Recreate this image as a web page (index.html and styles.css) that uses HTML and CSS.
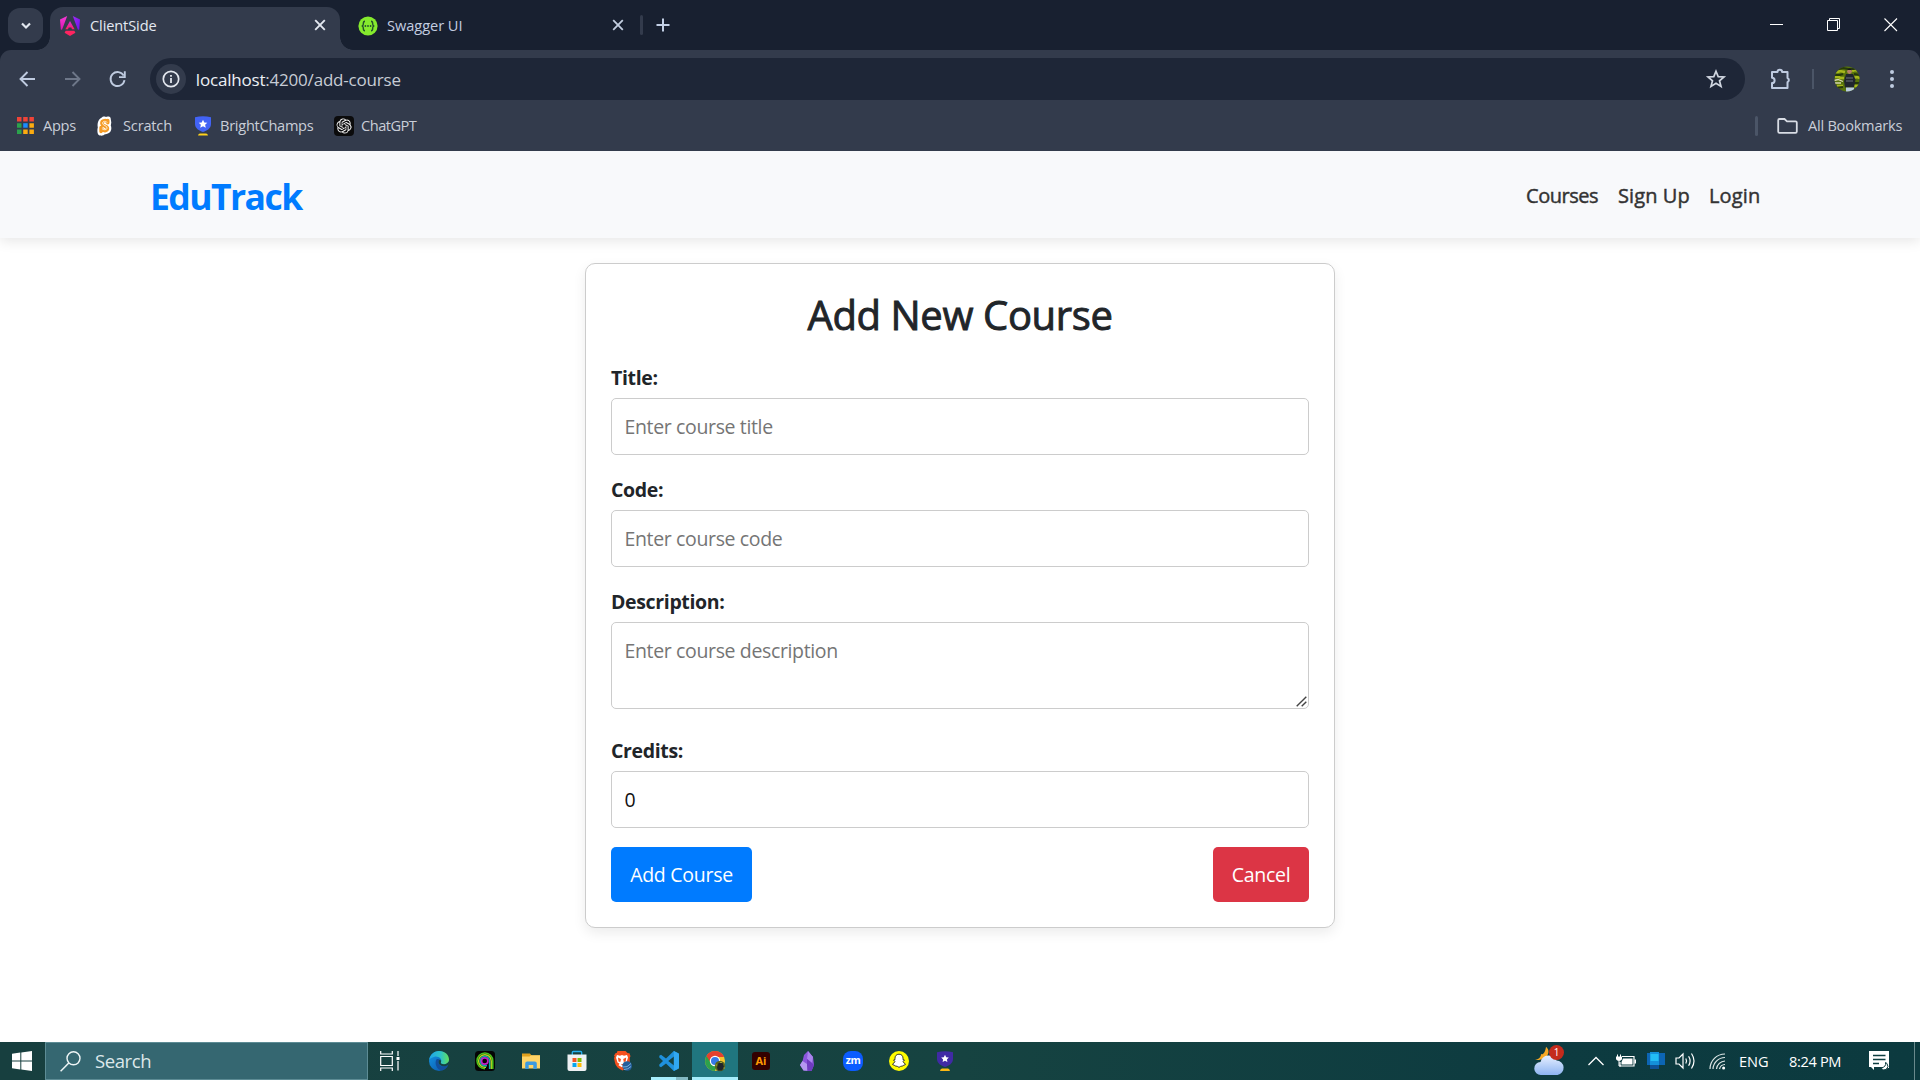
FILE: index.html
```html
<!DOCTYPE html>
<html lang="en">
<head>
<meta charset="utf-8">
<title>ClientSide</title>
<link rel="stylesheet" href="styles.css">
</head>
<body>
<div class="screen">

<header class="tabstrip">
  <div class="tab-search"><svg width="12" height="8" viewBox="0 0 12 8"><path d="M2 1.5 6 5.5 10 1.5" fill="none" stroke="#e3e8f0" stroke-width="2.2"/></svg></div>
  <div class="tab active">
    <svg class="favicon" width="20" height="20" viewBox="0 0 20 20">
      <defs>
        <linearGradient id="ngl" x1="0" y1="0" x2="0" y2="1"><stop offset="0" stop-color="#f83ad8"/><stop offset="1" stop-color="#d816b0"/></linearGradient>
        <linearGradient id="ngr" x1="0" y1="0" x2="1" y2="1"><stop offset="0" stop-color="#a12af5"/><stop offset="1" stop-color="#6a12ee"/></linearGradient>
        <linearGradient id="nga" x1="0" y1="0" x2="0" y2="1"><stop offset="0" stop-color="#d52ae0"/><stop offset="1" stop-color="#ff2060"/></linearGradient>
      </defs>
      <path d="M0 3.6 7.2 0 2 13.8.8 13.6Z" fill="url(#ngl)"/><path d="M12.8 0 20 3.6 19.2 13.6 18 13.8Z" fill="url(#ngr)"/>
      <path d="M10 5 14.6 13.3H12l-.7-1.7H8.7L8 13.3H5.4Z" fill="url(#nga)"/><path d="M5.6 14.8h8.800l1 2L10 20l-5.400-3.200Z" fill="#ff2460"/>
    </svg>
    <span class="tab-title">ClientSide</span>
    <svg class="close" width="12" height="12" viewBox="0 0 12 12"><path d="M1.2 1.2 10.8 10.8M10.8 1.2 1.2 10.8" stroke="#e3e8f0" stroke-width="1.9"/></svg>
  </div>
  <div class="tab">
    <svg class="favicon" width="20" height="20" viewBox="0 0 20 20">
      <circle cx="10" cy="10" r="9.6" fill="#85ea2d"/>
      <path d="M7 5.2C5 5.2 5.4 7 5.3 8.2 5.2 9.3 4.9 9.8 3.8 10c1.1.2 1.4.7 1.5 1.8.1 1.2-.3 3 1.7 3M13 5.2c2 0 1.6 1.8 1.7 3 .1 1.1.4 1.6 1.5 1.8-1.1.2-1.4.7-1.5 1.8-.1 1.2.3 3-1.7 3" fill="none" stroke="#23512c" stroke-width="1.4"/>
      <circle cx="7.4" cy="10" r=".9" fill="#23512c"/><circle cx="10" cy="10" r=".9" fill="#23512c"/><circle cx="12.6" cy="10" r=".9" fill="#23512c"/>
    </svg>
    <span class="tab-title">Swagger UI</span>
    <svg class="close" width="12" height="12" viewBox="0 0 12 12"><path d="M1.2 1.2 10.8 10.8M10.8 1.2 1.2 10.8" stroke="#c3cee0" stroke-width="1.8"/></svg>
  </div>
  <i class="tab-divider"></i>
  <svg class="new-tab" width="14" height="14" viewBox="0 0 14 14"><path d="M7 .5v13M.5 7h13" stroke="#c3d0e6" stroke-width="2"/></svg>
  <div class="window-controls">
    <svg width="14" height="14" viewBox="0 0 14 14"><path d="M0 6.5h13" stroke="#fff"/></svg>
    <svg width="14" height="14" viewBox="0 0 14 14"><path d="M.5 2.5h10v10H.5ZM2.5 2.5v-2h10v10h-2" fill="none" stroke="#fff"/></svg>
    <svg width="14" height="14" viewBox="0 0 14 14"><path d="M.5.5l12.5 12.5M13 .5.5 13" stroke="#fff" stroke-width="1.1"/></svg>
  </div>
</header>

<div class="browser-bar">
  <div class="toolbar">
    <div class="nav-icons">
      <svg width="20" height="20" viewBox="0 0 20 20"><path d="M18 10H4M10.500 3 3.500 10l7 7" fill="none" stroke="#bfcbe0" stroke-width="1.9"/></svg>
      <svg width="20" height="20" viewBox="0 0 20 20"><path d="M3 10h14M10.500 3l7 7-7 7" fill="none" stroke="#6e7789" stroke-width="1.9"/></svg>
      <svg width="20" height="20" viewBox="0 0 20 20"><path d="M16.700 6.600A7 7 0 1 0 17.500 11.200" fill="none" stroke="#bfcbe0" stroke-width="1.9"/><path d="M17.800 2.300v5.800h-5.800" fill="none" stroke="#bfcbe0" stroke-width="1.9"/></svg>
    </div>
    <div class="omnibox">
      <span class="site-info"><svg width="18" height="18" viewBox="0 0 18 18"><circle cx="9" cy="9" r="7.7" fill="none" stroke="#e3e7ee" stroke-width="1.7"/><path d="M9 8v5M9 5v1.8" stroke="#e3e7ee" stroke-width="1.8"/></svg></span>
      <span class="url"><b>localhost</b>:4200/add-course</span>
      <svg class="star" width="20" height="20" viewBox="0 0 20 20"><path d="M10 2.200 12.200 7.600 18 8l-4.500 3.800L15 17.400 10 14.300 5 17.400l1.500-5.600L2 8l5.800-.4Z" fill="none" stroke="#d0d6e0" stroke-width="1.7"/></svg>
    </div>
    <svg class="puzzle" width="22" height="22" viewBox="0 0 22 22"><path d="M2 4h5.500a2.300 2.300 0 0 1 4.600 0H17.500v6a2.300 2.300 0 0 1 0 4.200V20H2v-5a2.600 2.600 0 0 0 0-5.200Z" fill="none" stroke="#bfcbe0" stroke-width="2" stroke-linejoin="round"/></svg>
    <i class="bar-divider"></i>
    <svg class="avatar" width="26" height="26" viewBox="0 0 26 26">
      <defs><clipPath id="av"><circle cx="13" cy="13" r="12.5"/></clipPath></defs>
      <g clip-path="url(#av)"><path fill="#56720c" d="M0 0h26v26H0z"/><path d="M0 6h4l2-1 5 1M18 5l3-1 4 1M1 11h4l1 1h4M19 12l4-1 3 1M3 20h6M20 20h6" stroke="#a7b81c" stroke-width="2.600" fill="none"/><path d="M0 3h5l4-1 5 1h12M0 9h6l3-1M20 8l6 1M0 22l9-1M20 17h6" stroke="#26380c" stroke-width="2" fill="none"/><path d="M0 14.500l4-1 5 2M1 17h6" stroke="#d8d6b0" stroke-width="1.3" fill="none"/><path d="M12 8h7l2.500 5.500-1.500 8h-9L10 15Z" fill="#20252f"/><path d="M12 12h7M12 15h7" stroke="#6b727c" stroke-width="1"/><circle cx="15.500" cy="5.600" r="2.400" fill="#b48167"/><path d="M13 4q2.500-3 5 0" fill="#17181a"/><path d="M12 21.500h8v5h-8z" fill="#b9cbe0"/></g>
    </svg>
    <svg class="kebab" width="4" height="20" viewBox="0 0 4 20"><g fill="#bfcbe0"><circle cx="2" cy="3" r="2"/><circle cx="2" cy="10" r="2"/><circle cx="2" cy="17" r="2"/></g></svg>
  </div>
  <nav class="bookmarks">
    <a class="bm bm-apps"><svg width="17" height="17" viewBox="0 0 17 17"><path fill="#f04438" d="M0 0h4.500v4.500H0zM6.200 0h4.500v4.500H6.200zM12.400 0h4.500v4.500h-4.500z"/><path fill="#2ba24c" d="M0 6.200h4.500v4.500H0zM0 12.400h4.500v4.500H0z"/><path fill="#1a8cff" d="M6.200 6.200h4.500v4.500H6.200z"/><path fill="#fbab10" d="M12.400 6.200h4.500v4.500h-4.500zM6.200 12.400h4.500v4.500H6.200zM12.400 12.400h4.500v4.500h-4.500z"/></svg><span>Apps</span></a>
    <a class="bm bm-scratch"><svg width="16" height="20" viewBox="0 0 16 20"><path d="M4.500 1.800C5.500.2 8 .3 8.800.9 9.800.2 13 0 13.600 2l.7 4.500-.5 3c1.400 3.500.2 7.800-4.300 8.500q-1 .2-1.800.2C6.500 20 3 20.200 1.200 18.500.2 17 .2 13 .8 11.500.2 8 .8 3.800 4.500 1.800Z" fill="#fff"/><path d="M10.800 6.800V4.500M10.500 5.800C9.500 4 4.800 4 4.800 7.200c.2 3.400 6 2.500 5.700 5.500-.3 2.600-4.300 2.600-6 .3M4 11.500v4" fill="none" stroke="#f59b25" stroke-width="3.400" stroke-linecap="round"/><path d="M10.200 6.500C9 4.700 5.400 5 5.500 7.200c.3 2.500 4.900 2.300 4.600 5-.4 2-3.600 2-5.200.4" fill="none" stroke="#fff4dc" stroke-width=".9"/></svg><span>Scratch</span></a>
    <a class="bm bm-bright"><svg width="18" height="20" viewBox="0 0 18 20"><path d="M1 1.200q4-1 8-1t8 1V8c0 4.500-4 6.500-8 8-4-1.500-8-3.500-8-8Z" fill="#4263f5"/><path d="M9 3.800 10.300 6.500l3 .3-2.200 2 .7 3L9 10.300l-2.800 1.500.7-3-2.200-2 3-.3Z" fill="#fff"/><path d="M4 19.500q.4-2 2-2h6q1.600 0 2 2Z" fill="#ffd21c"/></svg><span>BrightChamps</span></a>
    <a class="bm bm-gpt"><svg width="20" height="20" viewBox="0 0 20 20"><rect width="20" height="20" rx="4" fill="#0b0b0c"/><path transform="translate(2.400 2.400) scale(.633)" fill="#f2f2f2" d="M22.2819 9.8211a5.9847 5.9847 0 0 0-.5157-4.9108 6.0462 6.0462 0 0 0-6.5098-2.9A6.0651 6.0651 0 0 0 4.9807 4.1818a5.9847 5.9847 0 0 0-3.9977 2.9 6.0462 6.0462 0 0 0 .7427 7.0966 5.98 5.98 0 0 0 .511 4.9107 6.051 6.051 0 0 0 6.5146 2.9001A5.9847 5.9847 0 0 0 13.2599 24a6.0557 6.0557 0 0 0 5.7718-4.2058 5.9894 5.9894 0 0 0 3.9977-2.9001 6.0557 6.0557 0 0 0-.7475-7.0729zm-9.022 12.6081a4.4755 4.4755 0 0 1-2.8764-1.0408l.1419-.0804 4.7783-2.7582a.7948.7948 0 0 0 .3927-.6813v-6.7369l2.02 1.1686a.071.071 0 0 1 .038.052v5.5826a4.504 4.504 0 0 1-4.4945 4.4944zm-9.6607-4.1254a4.4708 4.4708 0 0 1-.5346-3.0137l.142.0852 4.783 2.7582a.7712.7712 0 0 0 .7806 0l5.8428-3.3685v2.3324a.0804.0804 0 0 1-.0332.0615L9.74 19.9502a4.4992 4.4992 0 0 1-6.1408-1.6464zM2.3408 7.8956a4.485 4.485 0 0 1 2.3655-1.9728V11.6a.7664.7664 0 0 0 .3879.6765l5.8144 3.3543-2.0201 1.1685a.0757.0757 0 0 1-.071 0l-4.8303-2.7865A4.504 4.504 0 0 1 2.3408 7.872zm16.5963 3.8558L13.1038 8.364 15.1192 7.2a.0757.0757 0 0 1 .071 0l4.8303 2.7913a4.4944 4.4944 0 0 1-.6765 8.1042v-5.6772a.79.79 0 0 0-.407-.667zm2.0107-3.0231l-.142-.0852-4.7735-2.7818a.7759.7759 0 0 0-.7854 0L9.409 9.2297V6.8974a.0662.0662 0 0 1 .0284-.0615l4.8303-2.7866a4.4992 4.4992 0 0 1 6.6802 4.66zM8.3065 12.863l-2.02-1.1638a.0804.0804 0 0 1-.038-.0567V6.0742a4.4992 4.4992 0 0 1 7.3757-3.4537l-.142.0805L8.704 5.459a.7948.7948 0 0 0-.3927.6813zm1.0976-2.3654l2.602-1.4998 2.6069 1.4998v2.9994l-2.5974 1.4997-2.6067-1.4997Z"/></svg><span>ChatGPT</span></a>
    <i class="bar-divider bm-divider"></i>
    <a class="bm bm-all"><svg width="21" height="16" viewBox="0 0 21 16"><path d="M2.5 1H7.500L10 3.300h8.500q1.300 0 1.300 1.300v9q0 1.300-1.300 1.300h-16q-1.300 0-1.300-1.300V2.300Q1.200 1 2.500 1Z" fill="none" stroke="#d8dce4" stroke-width="1.8"/></svg><span>All Bookmarks</span></a>
  </nav>
</div>

<div class="page">
  <nav class="navbar">
    <a class="brand">EduTrack</a>
    <div class="links"><a class="l-courses">Courses</a><a class="l-signup">Sign Up</a><a class="l-login">Login</a></div>
  </nav>
  <main class="card">
    <h2>Add New Course</h2>
    <form>
      <div class="field"><label for="t">Title:</label><input id="t" type="text" placeholder="Enter course title"></div>
      <div class="field"><label for="c">Code:</label><input id="c" type="text" placeholder="Enter course code"></div>
      <div class="field field-area"><label for="d">Description:</label><textarea id="d" placeholder="Enter course description"></textarea>
        <svg class="grip" width="11" height="11" viewBox="0 0 11 11"><path d="M.7 10.300 10.300.7M5.700 10.300l4.600-4.600" stroke="#444" stroke-width="1.400"/></svg></div>
      <div class="field"><label for="r">Credits:</label><input id="r" type="text" value="0"></div>
      <div class="actions"><button type="button" class="add">Add Course</button><button type="button" class="cancel">Cancel</button></div>
    </form>
  </main>
</div>

<footer class="taskbar">
  <div class="start"><svg width="20" height="20" viewBox="0 0 20 20"><path fill="#fff" d="M0 2.700 8.300 1.500V9.400H0ZM9.300 1.400 20 0v9.400H9.300ZM0 10.500h8.300v8L0 17.300ZM9.300 10.500H20V20L9.300 18.600Z"/></svg></div>
  <div class="search"><svg width="21" height="21" viewBox="0 0 21 21"><circle cx="13.5" cy="7.3" r="6.5" fill="none" stroke="#eef5f6" stroke-width="1.4"/><path d="M8.800 12 .6 20.300" stroke="#eef5f6" stroke-width="1.5"/></svg><span>Search</span></div>
  <div class="task-view"><svg width="20" height="20" viewBox="0 0 20 20"><path d="M.7 5.500h11.600v9H.7ZM.7 0v3h11.600V0M.7 20v-3h11.600v3M18 0v5M18 10v9.500" fill="none" stroke="#fff" stroke-width="1.2"/><path d="M16.500 6h3v3h-3z" fill="#fff"/></svg></div>
  <div class="apps">
    <div class="app"><svg width="20" height="20" viewBox="0 0 20 20"><defs><linearGradient id="eg" x1="0" y1="0" x2="1" y2="0"><stop offset="0" stop-color="#1fa4e8"/><stop offset=".6" stop-color="#2fc4c4"/><stop offset="1" stop-color="#62df5a"/></linearGradient><linearGradient id="eb" x1="0" y1="0" x2="1" y2="1"><stop offset="0" stop-color="#1398e6"/><stop offset="1" stop-color="#0c4fa5"/></linearGradient></defs><circle cx="10" cy="10" r="10" fill="url(#eb)"/><path d="M0 9.500C.6 4 5 0 10 0c6 0 10 4 10 8.600 0 3.200-2.400 4.800-5 4.800-2.500 0-3.600-.9-3.200-1.800C14 8 9 4.800 5.500 5.800 2.500 6.600.6 8 0 9.500Z" fill="url(#eg)"/><path d="M7.500 8.200C5 12.500 8 19 13 19.500c3-.8 5-2.800 6-5-4 2.300-9.500 1-9.600-3.300 0-1.300.8-2 1.500-2.500q-1.800-1.300-3.400-.5Z" fill="#124f9c"/><path d="M20 13.500c-4.500 3.400-10.500 1.400-10.500-2.500 0-1 .8-2 1.500-2.200 1.800 1 .8 2.300.8 2.800 0 2 4.700 3 8.200-1.200Z" fill="#164342"/></svg></div>
    <div class="app"><svg width="20" height="20" viewBox="0 0 20 20"><rect width="20" height="20" rx="3.500" fill="#050505"/><g fill="none" stroke-width="1.5"><path d="M17.800 18v-8A7.900 7.900 0 1 0 10 17.800" stroke="#4bc51d"/><path d="M16.200 18v-8A6.300 6.300 0 1 0 10 16.300h1" stroke="#b7d91b"/><path d="M14.600 18v-8A4.700 4.700 0 1 0 10 14.700h2" stroke="#15a8a8"/><circle cx="9.7" cy="10" r="3.200" stroke="#c11fc5" stroke-width="1.7"/></g></svg></div>
    <div class="app"><svg width="20" height="20" viewBox="0 0 20 20"><path d="M1 2.500h8l1.500 2H19V9H1Z" fill="#e0a11d"/><path d="M1 5.500h7.500L10 4.200h9V17.500H1Z" fill="#ffd466"/><path d="M4.200 18v-5.500q0-2 2-2h7.600q2 0 2 2V18h-3.500v-4H7.700v4Z" fill="#3c9ae0"/></svg></div>
    <div class="app"><svg width="20" height="20" viewBox="0 0 20 20"><path d="M5.300 5V1.500q0-1 1-1h7.400q1 0 1 1V5" fill="none" stroke="#25b0ef" stroke-width="1.3"/><path d="M.5 3.500h19v14.500q0 2-2 2h-15q-2 0-2-2Z" fill="#eef1f3"/><path d="M5.500 7h4v4h-4z" fill="#f35325"/><path d="M10.500 7h4v4h-4z" fill="#7fba00"/><path d="M5.500 12h4v4h-4z" fill="#05a6f0"/><path d="M10.500 12h4v4h-4z" fill="#ffba08"/></svg></div>
    <div class="app"><svg width="20" height="20" viewBox="0 0 20 20"><path d="M4.500 0h8l2 2 2 .3 1 3-.8 1.500.2 5Q16 16 9.500 19.500 3 16.500 2 12L1 7l.7-1.500-.7-1L2.700 2h1Z" fill="#f4511e"/><path d="m4 4 3 .8 2-.8 2 .8 3-.8 1 2.500-1.500 5-2 1.300 1 1.500-3.500 2-3.500-2 1-1.500-2-1.300L3 6.500Z" fill="#fff"/><path d="m5 6.500 3 1.500-.7 3-1.800-.6ZM13.200 6.500 10.200 8l.6 3 1.900-.6ZM8 13h2.500l-1.200 1.500Z" fill="#f4511e"/><circle cx="14.200" cy="15" r="4.800" fill="#255f9b"/><path d="M10 16q4 1 8-3.500M11 18.500q4 0 7-3" stroke="#79b1dc" fill="none"/></svg></div>
    <div class="app vscode"><svg width="20" height="20" viewBox="0 0 20 20"><path d="m14.800 0 4.500 2.200q.7.4.7 1.200v13.200q0 .8-.7 1.200L14.800 20 7 12.500 2 16.300.3 15.200V13.600L4 10 .3 6.400V4.800L2 3.700l5 3.800ZM15 5.500 9.200 10l5.800 4.500Z" fill="#1f91dc"/><path d="m14.800 0 4.500 2.200q.7.4.7 1.200v13.200q0 .8-.7 1.200L14.800 20Z" fill="#31a8f2"/></svg></div>
    <div class="app current"><svg width="20" height="20" viewBox="0 0 20 20"><circle cx="10" cy="10" r="10" fill="#f5c52b"/><path d="M10 10H1.300L1.400 5A10 10 0 0 1 18.700 5L19 6H10Z" fill="#e4402f"/><path d="M1.400 5A10 10 0 0 0 9.700 20L13 13.500 7 13.500Z" fill="#2da14b"/><circle cx="10" cy="10" r="5.200" fill="#fff"/><circle cx="10" cy="10" r="4" fill="#3579e8"/><circle cx="15" cy="15" r="5.200" fill="#59641c"/><path d="M13.500 12h4l1.500 4-2 3.500h-4L12 16.500Z" fill="#20242a"/><path d="M10.500 14h1.500M18.500 17h1.500M15 11.500h2" stroke="#9fa940"/></svg></div>
    <div class="app"><span class="ai">Ai</span></div>
    <div class="app"><svg width="16" height="20" viewBox="0 0 16 20"><path d="M9 0 5 4 3.500 10 1 14l3.500 5.500 8 .5 2.500-6-1-8Z" fill="#8a55dc"/><path d="m9 0 5 6-1 6-5-4Z" fill="#a983ee"/><path d="M3.500 10 8 13l.5 6.700-4-.2L1 14Z" fill="#b497f0"/><path d="m8 8 5 4 2 2-2.500 6-4-.3L8 13Z" fill="#6e3cc0"/></svg></div>
    <div class="app"><span class="zm">zm</span></div>
    <div class="app"><svg width="20" height="20" viewBox="0 0 20 20"><circle cx="10" cy="10" r="10" fill="#fffc00"/><path d="M10 3.200c2.800 0 4 2 4 4v1.500l1.500.3-1.400 1.500q.9 2 2.400 2.500-.4 1.300-2 1.300-.4 1-1.600.8-1.500.1-2.900 1.300-1.400-1.200-2.900-1.300-1.200.2-1.600-.8-1.600 0-2-1.300Q5 12.500 5.900 10.500L4.500 9 6 8.700V7.200c0-2 1.200-4 4-4Z" fill="#fff" stroke="#222" stroke-width=".9"/></svg></div>
    <div class="app"><svg width="18" height="20" viewBox="0 0 18 20"><path d="M1 1.200q4-1 8-1t8 1V8c0 4.500-4 6.500-8 8-4-1.500-8-3.500-8-8Z" fill="#402aa5"/><path d="M9 3.800 10.200 6.300l2.600.3-1.900 1.800.5 2.700L9 9.800l-2.400 1.300.5-2.700-1.900-1.800 2.600-.3Z" fill="#fff"/><path d="M4 20q.4-2.600 2-2.600h6q1.600 0 2 2.600Z" fill="#fbb914"/></svg></div>
  </div>
  <div class="tray">
    <div class="weather"><svg width="31" height="30" viewBox="0 0 31 30"><defs><linearGradient id="cl" x1="0" y1="0" x2="0" y2="1"><stop offset="0" stop-color="#e6efff"/><stop offset="1" stop-color="#8db4f2"/></linearGradient></defs><path d="M12 1c5 3 3 14-11 13 5-1 6-4 6-6 2 1 4-1 5-7Z" fill="#f8a923"/><path d="M7 29a6.500 6.500 0 0 1-.5-13 8.500 8.500 0 0 1 16-1.500A7.300 7.300 0 0 1 23.500 29Z" fill="url(#cl)"/></svg><span class="badge">1</span></div>
    <svg class="chev" width="16" height="10" viewBox="0 0 16 10"><path d="m.5 9 7.500-7.500L15.500 9" fill="none" stroke="#fff" stroke-width="1.3"/></svg>
    <svg class="battery" width="20" height="14" viewBox="0 0 20 14"><path d="M6 2.500h12v9.500H4V8" fill="none" stroke="#fff" stroke-width="1.2"/><path d="M7 4.500h9.500v6h-11V8Z" fill="#fff"/><path d="M18.500 5.500h1.500v4h-1.500zM0 2.500h6v2.700q-1 1.800-3 1.800t-3-1.800ZM1 .5h1V3H1zM4 .5h1V3H4z" fill="#fff"/><path d="M3 6.500v5.500h2" fill="none" stroke="#fff"/></svg>
    <svg class="phone" width="18" height="18" viewBox="0 0 18 18"><path d="M0 1h18v12H0z" fill="#0c65b4"/><path d="M3 0h9v17H3z" fill="#1490da"/><path d="M3.500 2h8v7h-8z" fill="#23bdf4"/><path d="M3 13h9v4H3z" fill="#0e5298"/></svg>
    <svg class="volume" width="22" height="18" viewBox="0 0 22 18"><path d="M1 6h3l4-4v14l-4-4H1Z" fill="none" stroke="#fff" stroke-width="1.2"/><path d="M10.800 6.500q1.500 2.500 0 5M13.600 4.200q3 4.800 0 9.600M16.500 1.500q5 7.500 0 15" fill="none" stroke="#fff" stroke-width="1.2"/></svg>
    <svg class="wifi" width="17" height="17" viewBox="0 0 17 17"><g fill="none" stroke="#dfe8e8" stroke-width="1.2"><path d="M1 16A15 15 0 0 1 16 1M4 16A12 12 0 0 1 16 4.500M7.500 16A9 9 0 0 1 16 8M10.500 16A6 6 0 0 1 16 11.500"/></g><circle cx="14.6" cy="15" r="1.5" fill="#fff"/></svg>
    <span class="lang">ENG</span>
    <span class="time">8:24 PM</span>
    <svg class="notif" width="21" height="20" viewBox="0 0 21 20"><path d="M0 0h20v17h-4l-3-1H5v3l-3-3H0Z" fill="#fff"/><path d="M4 4.500h12.500M4 8.500h12.500M4 12.500h6" stroke="#0e3e41" stroke-width="1.3"/><path d="M16.500 11.500q1 4.500-4.500 5.500 2 3 5 1.500 3.500-2.500 1-6Z" fill="#fff" stroke="#0e3e41"/></svg>
    <i class="peek"></i>
  </div>
</footer>
</div>
</body>
</html>
```
FILE: styles.css
```css
* { box-sizing: border-box; }
body { margin: 0; font-family: "Open Sans", "Noto Sans", sans-serif; }
svg { display: block; flex: none; overflow: visible; }
.screen { width: 1920px; height: 1080px; display: flex; flex-direction: column; overflow: hidden; background: #182030; }

/* tab strip */
.tabstrip { height: 50px; flex: none; display: flex; align-items: flex-start; padding: 7px 0 0 8px; color: #c3cde0; font-size: 14.6px; letter-spacing: -.12px; }
.tab-search { width: 35px; height: 35px; margin: 1px 7px 0 0; border-radius: 12px; background: #333b4c; display: grid; place-items: center; }
.tab { position: relative; width: 290px; height: 43px; display: flex; align-items: center; padding: 0 14px 7px 10px; }
.tab + .tab { padding-left: 18px; width: 299px; padding-right: 17px; }
.tab-title { margin-left: 10px; flex: 1; line-height: 20px; padding-bottom: 1px; }
.tab .close { margin-bottom: 1px; }
.tab .favicon { margin-top: 1px; }
.tab + .tab .tab-title { margin-left: 9px; letter-spacing: -.05px; }
.tab + .tab .close { margin-right: -2px; }
.tab.active { background: #333b4c; border-radius: 13px 13px 0 0; color: #e4e9f2; }
.tab.active::before, .tab.active::after { content: ""; position: absolute; bottom: 0; width: 13px; height: 13px; }
.tab.active::before { left: -13px; background: radial-gradient(circle at 0 0, transparent 12.5px, #333b4c 13px); }
.tab.active::after { right: -13px; background: radial-gradient(circle at 100% 0, transparent 12.5px, #333b4c 13px); }
.tab-divider { width: 3px; height: 20px; margin: 8px 0 0 1px; border-radius: 2px; background: #333b4c; }
.new-tab { margin: 11px 0 0 13px; }
.window-controls { margin: 11px 22px 0 auto; display: flex; gap: 43px; }

/* toolbar */
.browser-bar { height: 101px; flex: none; background: #333b4c; border-radius: 11px 11px 0 0; }
.toolbar { height: 58px; display: flex; align-items: center; padding: 0 26px 0 17px; }
.nav-icons { display: flex; gap: 25px; width: 133px; }
.omnibox { width: 1597px; height: 42px; display: flex; align-items: center; border-radius: 21px; background: #1e2637; padding: 0 19px 0 6px; }
.site-info { width: 30px; height: 30px; border-radius: 50%; background: #333b4c; display: grid; place-items: center; }
.url { flex: 1; margin-left: 10px; padding-top: 1px; font-size: 17px; letter-spacing: -.2px; color: #c7ccd5; line-height: 24px; }
.url b { font-weight: 400; color: #eceff4; }
.puzzle { margin-left: 25px; margin-bottom: 1px; }
.bar-divider { width: 2px; height: 20px; background: #4b5567; }
.toolbar .bar-divider { margin: 0 20px 0 20px; }
.kebab { margin-left: 30px; }
.bookmarks { height: 34px; display: flex; align-items: center; padding: 1px 18px 0 17px; font-size: 14.6px; color: #c9ced8; }
.bm { display: flex; align-items: center; line-height: 20px; }
.bm span { padding-bottom: 1px; }
.bm-apps { width: 80px; gap: 9px; letter-spacing: -.3px; }
.bm-scratch { width: 97px; gap: 10px; letter-spacing: -.18px; }
.bm-bright { width: 140px; gap: 8px; letter-spacing: -.28px; }
.bm-gpt { gap: 7px; letter-spacing: -.5px; }
.bm-divider { width: 3px; border-radius: 2px; margin: 0 19px 0 auto; }
.bm-all { gap: 10px; width: 125px; letter-spacing: -.24px; white-space: nowrap; }

/* page */
.page { flex: 1; background: #fff; }
.navbar { height: 87px; background: #f8f9fb; box-shadow: 0 2.5px 12.5px rgba(0,0,0,.1); display: flex; justify-content: space-between; align-items: center; padding: 0 160px 0 150px; clip-path: inset(0 0 -20px 0); }
.brand { font-size: 35.5px; font-weight: 700; letter-spacing: -1.55px; color: #007bff; line-height: 48px; padding-top: 3px; }
.links { display: flex; font-size: 20px; color: #333; line-height: 30px; padding-top: 2px; -webkit-text-stroke: .45px #333; }
.l-courses { width: 92px; letter-spacing: -.47px; }
.l-signup { width: 91px; letter-spacing: .1px; }
.l-login { width: 51px; letter-spacing: .15px; }
.card { width: 750px; height: 665px; margin: 25px auto 0; border: 1px solid #ccc; border-radius: 10px; padding: 25px; background: #fff; box-shadow: 0 5px 12.5px rgba(0,0,0,.08); color: #212529; }
h2 { margin: 0 0 23px; height: 50px; padding-top: 2px; line-height: 48px; font-size: 40px; font-weight: 400; -webkit-text-stroke: .9px #212529; letter-spacing: -.37px; text-align: center; }
.field { position: relative; display: flex; flex-direction: column; margin-bottom: 19px; }
.field-area { margin-bottom: 26px; }
label { font-size: 19.5px; font-weight: 700; line-height: 30px; letter-spacing: -.35px; padding-top: 1px; margin-bottom: 5px; }
input, textarea { display: block; width: 698px; height: 57px; border: 1px solid #ccc; border-radius: 5px; padding: 12.5px; margin: 0; background: #fff; font: 400 19.5px/30px "Open Sans", "Noto Sans", sans-serif; letter-spacing: -.36px; color: #111; outline: 0; }
textarea { height: 87px; resize: none; overflow: hidden; }
.grip { position: absolute; right: 2px; bottom: 2px; }
::placeholder { color: #757575; opacity: 1; }
.actions { display: flex; justify-content: space-between; }
button { height: 55px; border: 0; border-radius: 5px; padding: 1px 0 0; color: #fff; font: 400 19.5px/30px "Open Sans", "Noto Sans", sans-serif; letter-spacing: -.28px; }
.add { width: 141px; background: #007bff; }
.cancel { width: 96px; background: #dc3545; }

/* taskbar */
.taskbar { height: 38px; flex: none; display: flex; background: linear-gradient(90deg, #173f3f, #164341 50%, #0d3b40 80%, #0c3a3f); color: #fff; }
.start { width: 45px; padding: 9px 0 0 12px; }
.search { width: 323px; height: 38px; border: 1px solid #5d8c95; background: #356771; display: flex; align-items: center; padding-left: 14px; font-size: 18.5px; letter-spacing: -.4px; color: #dce8ea; }
.search span { margin-left: 14px; padding-bottom: 1px; }
.task-view { width: 48px; padding: 9px 0 0 12px; }
.apps { display: flex; }
.app { width: 46px; height: 38px; display: grid; place-items: center; }
.vscode { border-bottom: 3px solid; border-image: linear-gradient(90deg, transparent 6px, #a6edfb 6px 30px, #83b9c2 30px 41px, transparent 41px) 1; padding-top: 3px; }
.current { background: #20767f; border-bottom: 3px solid #a6edfb; padding-top: 3px; }
.ai { width: 18px; height: 18px; border-radius: 3px; background: #330000; color: #ff9a00; font-size: 11px; font-weight: 700; line-height: 17px; text-align: center; }
.zm { width: 20px; height: 20px; border-radius: 8px; background: #0b5cff; font-size: 10.5px; font-weight: 700; line-height: 18px; text-align: center; letter-spacing: -.4px; }
.tray { margin-left: auto; display: flex; align-items: center; width: 386px; font-size: 14.6px; }
.weather { position: relative; width: 54px; height: 30px; }
.badge { position: absolute; left: 15px; top: -1px; width: 15px; height: 15px; border-radius: 50%; background: #c42b1c; font-size: 10px; line-height: 15px; text-align: center; }
.battery { margin-left: 12px; }
.phone { margin-left: 11px; }
.volume { margin-left: 10px; }
.wifi { margin-left: 12px; }
.lang { margin-left: 13px; width: 50px; letter-spacing: -.1px; }
.time { width: 80px; letter-spacing: -.35px; white-space: nowrap; }
.peek { width: 1px; height: 38px; background: #69898c; margin-left: 24px; }
```
